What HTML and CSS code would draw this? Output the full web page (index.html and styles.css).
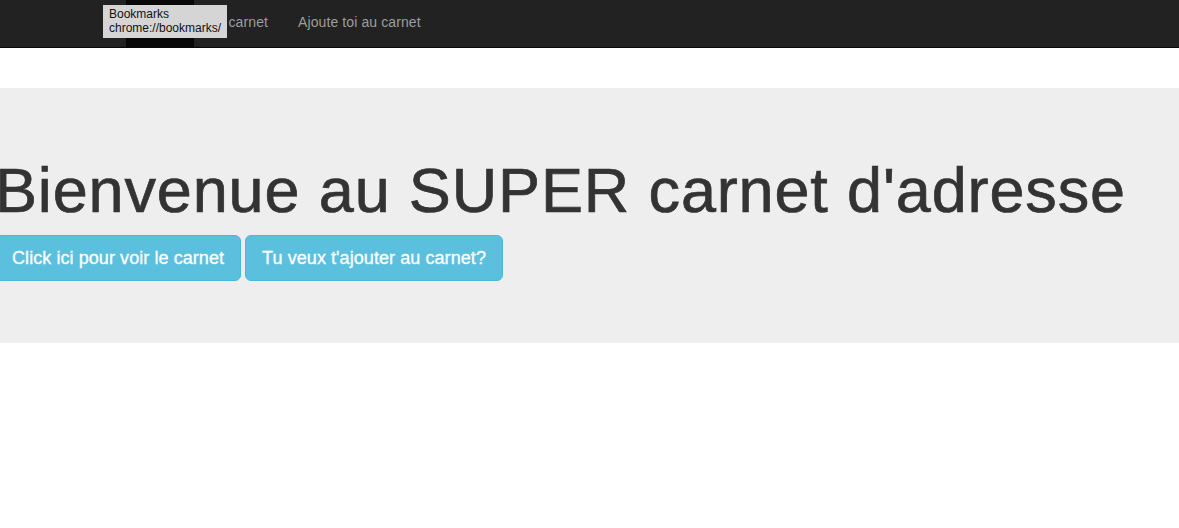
FILE: index.html
```html
<!DOCTYPE html>
<html lang="fr">
<head>
<meta charset="utf-8">
<title>Carnet d'adresse</title>
<link rel="stylesheet" href="styles.css">
</head>
<body>
<nav class="navbar">
  <ul class="nav">
    <li class="nav-item active"><a href="#">Home</a></li>
    <li class="nav-item"><a href="#">Le carnet</a></li>
    <li class="nav-item"><a href="#">Ajoute toi au carnet</a></li>
  </ul>
  <div class="tooltip">Bookmarks<br>chrome://bookmarks/</div>
</nav>
<section class="jumbotron">
  <div class="jumbo-inner">
    <h1 class="title">Bienvenue au SUPER carnet d'adresse</h1>
    <div class="actions">
      <a class="btn" href="#">Click ici pour voir le carnet</a>
      <a class="btn" href="#">Tu veux t'ajouter au carnet?</a>
    </div>
  </div>
</section>
</body>
</html>
```
FILE: styles.css
```css
html, body {
  margin: 0;
  padding: 0;
  background: #fff;
  font-family: "Liberation Sans", Arial, sans-serif;
  color: #333;
}
.navbar {
  position: relative;
  height: 47px;
  background: #222;
  border-bottom: 1px solid #080808;
  padding-left: 126px;
  display: flex;
  margin-bottom: 40px;
}
.nav {
  list-style: none;
  margin: 0;
  padding: 0;
  display: flex;
}
.nav-item a {
  display: block;
  height: 47px;
  box-sizing: border-box;
  padding: 0 15px 2px;
  line-height: 45px;
  font-size: 14px;
  color: #9d9d9d;
  text-decoration: none;
  letter-spacing: 0.1px;
}
.nav-item.active a {
  background: #080808;
  color: #fff;
}
.tooltip {
  position: absolute;
  left: 103px;
  top: 5px;
  width: 113px;
  padding: 2px 5px 3px 6px;
  background: #d5d5d5;
  color: #111;
  font-size: 12px;
  line-height: 14px;
}
.jumbotron {
  background: #eee;
  padding: 48px 0 47px;
}
.jumbo-inner {
  margin-left: -5px;
}
.title {
  margin: 20px 0 10px;
  font-size: 63px;
  line-height: 69px;
  font-weight: 500;
  color: #333;
  white-space: nowrap;
  letter-spacing: 0.85px;
  -webkit-text-stroke: 0.7px #333;
}
.actions {
  display: flex;
  gap: 4px;
  margin-bottom: 15px;
}
.btn {
  display: block;
  padding: 10px 16px;
  font-size: 18px;
  line-height: 24px;
  color: #fff;
  background: #5bc0de;
  border: 1px solid #46b8da;
  border-radius: 6px;
  text-decoration: none;
  letter-spacing: 0.07px;
  -webkit-text-stroke: 0.3px #fff;
}
```
